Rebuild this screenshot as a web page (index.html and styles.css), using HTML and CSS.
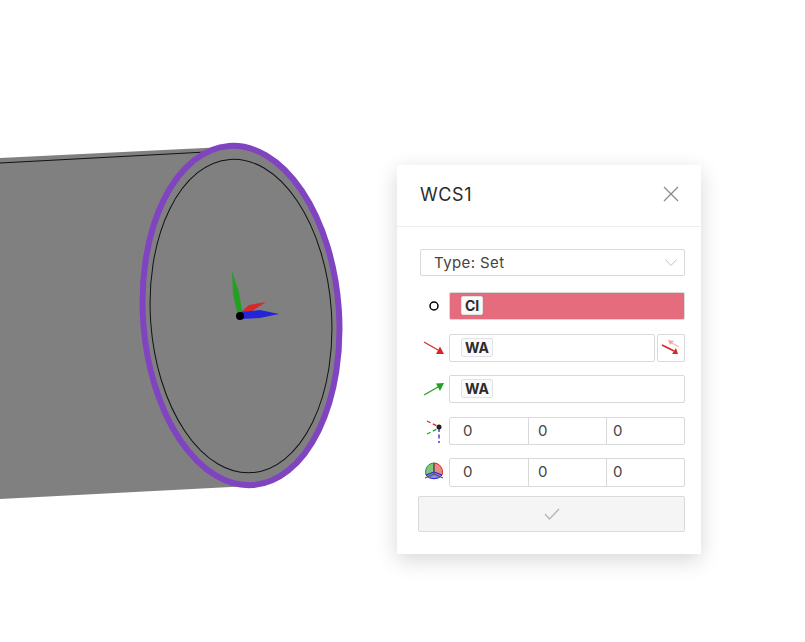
FILE: index.html
```html
<!DOCTYPE HTML>
<html>
	<head><title>WCS1</title>
		<meta name="viewport" content="width=device-width, initial-scale=1">
		<link rel="stylesheet" href="styles.css">
	</head>
	<body>
		<svg class="scene" width="805" height="642" viewBox="0 0 805 642">
			<polygon points="0,158 225,147 250,486 0,499" fill="#808080"/>
			<line x1="0" y1="163" x2="206" y2="152" stroke="#111" stroke-width="1.2"/>
			<ellipse cx="241" cy="315.5" rx="98" ry="170" transform="rotate(-4 241 315.5)" fill="#808080" stroke="#8044c0" stroke-width="6"/>
			<ellipse cx="241" cy="316" rx="90.5" ry="157" transform="rotate(-4 241 316)" fill="none" stroke="#111" stroke-width="1"/>
			<polygon points="232,271 239,292 243,316 238,316 233,294" fill="#22a022"/>
			<polygon points="266,302 252,311 241,319 240,313 249,305" fill="#d62828"/>
			<polygon points="279,314 260,318 241,319 241,312 260,310" fill="#2424d8"/>
			<circle cx="240" cy="316" r="4" fill="#000"/>
		</svg>

		<div class="panel">
			<div class="panel-head">
				<span class="panel-title">WCS1</span>
				<svg class="close" width="16" height="16" viewBox="0 0 16 16"><path d="M1 1 L15 15 M15 1 L1 15" stroke="#888" stroke-width="1.2" fill="none"/></svg>
			</div>
			<div class="panel-body">
				<div class="select">
					<span>Type: Set</span>
					<svg width="12" height="7" viewBox="0 0 12 7"><path d="M.5 .5 L6 6.5 L11.500 .5" stroke="#c4c4c4" fill="none"/></svg>
				</div>

				<div class="row row-first">
					<div class="row-icon"><svg width="12" height="12" viewBox="0 0 12 12"><circle cx="6" cy="6" r="4" stroke="#000" stroke-width="1.500" fill="none"/></svg></div>
					<div class="field field-active"><span class="tag">CI</span></div>
				</div>

				<div class="row">
					<div class="row-icon"><svg width="22" height="16" viewBox="0 0 22 16"><path d="M1 2 L15 10" stroke="#d62828" stroke-width="1.300"/><polygon points="21,14 13,14 17,6.500" fill="#d62828"/></svg></div>
					<div class="field"><span class="tag">WA</span></div>
					<div class="flip">
						<svg width="22" height="20" viewBox="0 0 22 20">
							<path d="M19 9 L10 4" stroke="#f5b5b5" stroke-width="1.300"/><polygon points="8,2 14,3 10,7" fill="#f5a5a5"/>
							<path d="M2 7 L14 13" stroke="#d62828" stroke-width="1.600"/><polygon points="18,16 12,16 16,10" fill="#d62828"/>
						</svg>
					</div>
				</div>

				<div class="row row-tight">
					<div class="row-icon"><svg width="22" height="16" viewBox="0 0 22 16"><path d="M1 14 L15 6" stroke="#22a022" stroke-width="1.300"/><polygon points="21,2 13,2.500 17,10" fill="#22a022"/></svg></div>
					<div class="field"><span class="tag">WA</span></div>
				</div>

				<div class="row">
					<div class="row-icon">
						<svg width="22" height="24" viewBox="0 0 22 24">
							<path d="M4 2 L16 8" stroke="#d62828" stroke-width="1.300" stroke-dasharray="4 2.500"/>
							<path d="M4 15 L16 9" stroke="#22a022" stroke-width="1.300" stroke-dasharray="4 2.500"/>
							<path d="M16 9 V24" stroke="#2424d8" stroke-width="1.300" stroke-dasharray="4 2.500"/>
							<circle cx="16" cy="8" r="2.500" fill="#222"/>
						</svg>
					</div>
					<div class="coords"><span>0</span><span>0</span><span>0</span></div>
				</div>

				<div class="row row-tight row-tall">
					<div class="row-icon">
						<svg width="20" height="21" viewBox="0 0 20 21">
							<path d="M10 1 A8.500 9 0 0 0 2 13 L10 10 Z" fill="#7fc47f" stroke="#22a022"/>
							<path d="M10 1 A8.500 9 0 0 1 18 13 L10 10 Z" fill="#e88a8a" stroke="#d62828"/>
							<path d="M2 13 A9 7 0 0 0 18 13 L10 10 Z" fill="#8a8ae8" stroke="#2424d8"/>
							<path d="M10 1 V12 L1 16 M10 12 L19 16" stroke="#555" stroke-width="1.200" fill="none"/>
						</svg>
					</div>
					<div class="coords"><span>0</span><span>0</span><span>0</span></div>
				</div>

				<div class="submit">
					<svg width="16" height="12" viewBox="0 0 16 12"><path d="M1 6 L5.500 11 L15 1" stroke="#b5b5b5" stroke-width="1.300" fill="none"/></svg>
				</div>
			</div>
		</div>
	</body>
</html>
```

FILE: styles.css
```css
* {box-sizing: border-box;}

body {
	margin: 0;
	width: 805px;
	height: 642px;
	overflow: hidden;
	background: #fff;
	font-family: Inter, "Liberation Sans", sans-serif;
	color: #333;
}

.scene {
	position: absolute;
	top: 0;
	left: 0;
}

.panel {
	position: absolute;
	top: 165px;
	left: 397px;
	width: 304px;
	height: 389px;
	background: #fff;
	box-shadow: 0 6px 20px rgba(0, 0, 0, 0.16);
}

.panel-head {
	display: flex;
	align-items: center;
	justify-content: space-between;
	height: 62px;
	padding: 0 22px 4px 23px;
	border-bottom: 1px solid #eee;
}

.panel-title {
	padding-top: 2px;
	font-size: 18px;
	letter-spacing: 0.6px;
	color: #2b2b2b;
}

.panel-body {
	padding: 22px 16px 0 21px;
}

.select {
	display: flex;
	align-items: center;
	justify-content: space-between;
	height: 27px;
	margin-left: 2px;
	padding: 0 7px 0 13px;
	border: 1px solid #d9d9d9;
	border-radius: 2px;
	font-size: 15px;
	letter-spacing: 0.4px;
	color: #444;
}

.row {
	display: flex;
	align-items: stretch;
	height: 28px;
	margin-top: 14px;
	margin-left: 2px;
}

.row-first {
	margin-top: 16px;
}

.row-tight {
	margin-top: 13px;
}

.row-tall {
	height: 29px;
}

.row-icon {
	display: flex;
	align-items: center;
	justify-content: center;
	flex: 0 0 29px;
}

.row-icon svg {
	margin-right: 1px;
}

.field {
	flex: 1;
	display: flex;
	align-items: center;
	padding: 0 0 2px 11px;
	border: 1px solid #d9d9d9;
	border-radius: 2px;
}

.field-active {
	background: #e56c7c;
}

.tag {
	padding: 0 3px;
	background: #fafafa;
	border: 1px solid #e2e2e2;
	border-radius: 2px;
	font-size: 14px;
	line-height: 17px;
	font-weight: 700;
	color: #2b2b2b;
}

.flip {
	display: flex;
	align-items: center;
	justify-content: center;
	flex: 0 0 28px;
	margin-left: 2px;
	border: 1px solid #d9d9d9;
	border-radius: 2px;
}

.coords {
	flex: 1;
	display: flex;
	border: 1px solid #d9d9d9;
	border-radius: 2px;
}

.coords span {
	flex: 0 0 78px;
	padding-left: 9px;
	border-left: 1px solid #d9d9d9;
	font-size: 15px;
	line-height: 25px;
	color: #444;
}

.coords span:first-child {
	padding-left: 13px;
	border-left: none;
}

.coords span:last-child {
	flex: 1;
	padding-left: 6px;
}

.submit {
	display: flex;
	align-items: center;
	justify-content: center;
	height: 36px;
	margin-top: 9px;
	background: #f5f5f5;
	border: 1px solid #d9d9d9;
	border-radius: 2px;
}
```
